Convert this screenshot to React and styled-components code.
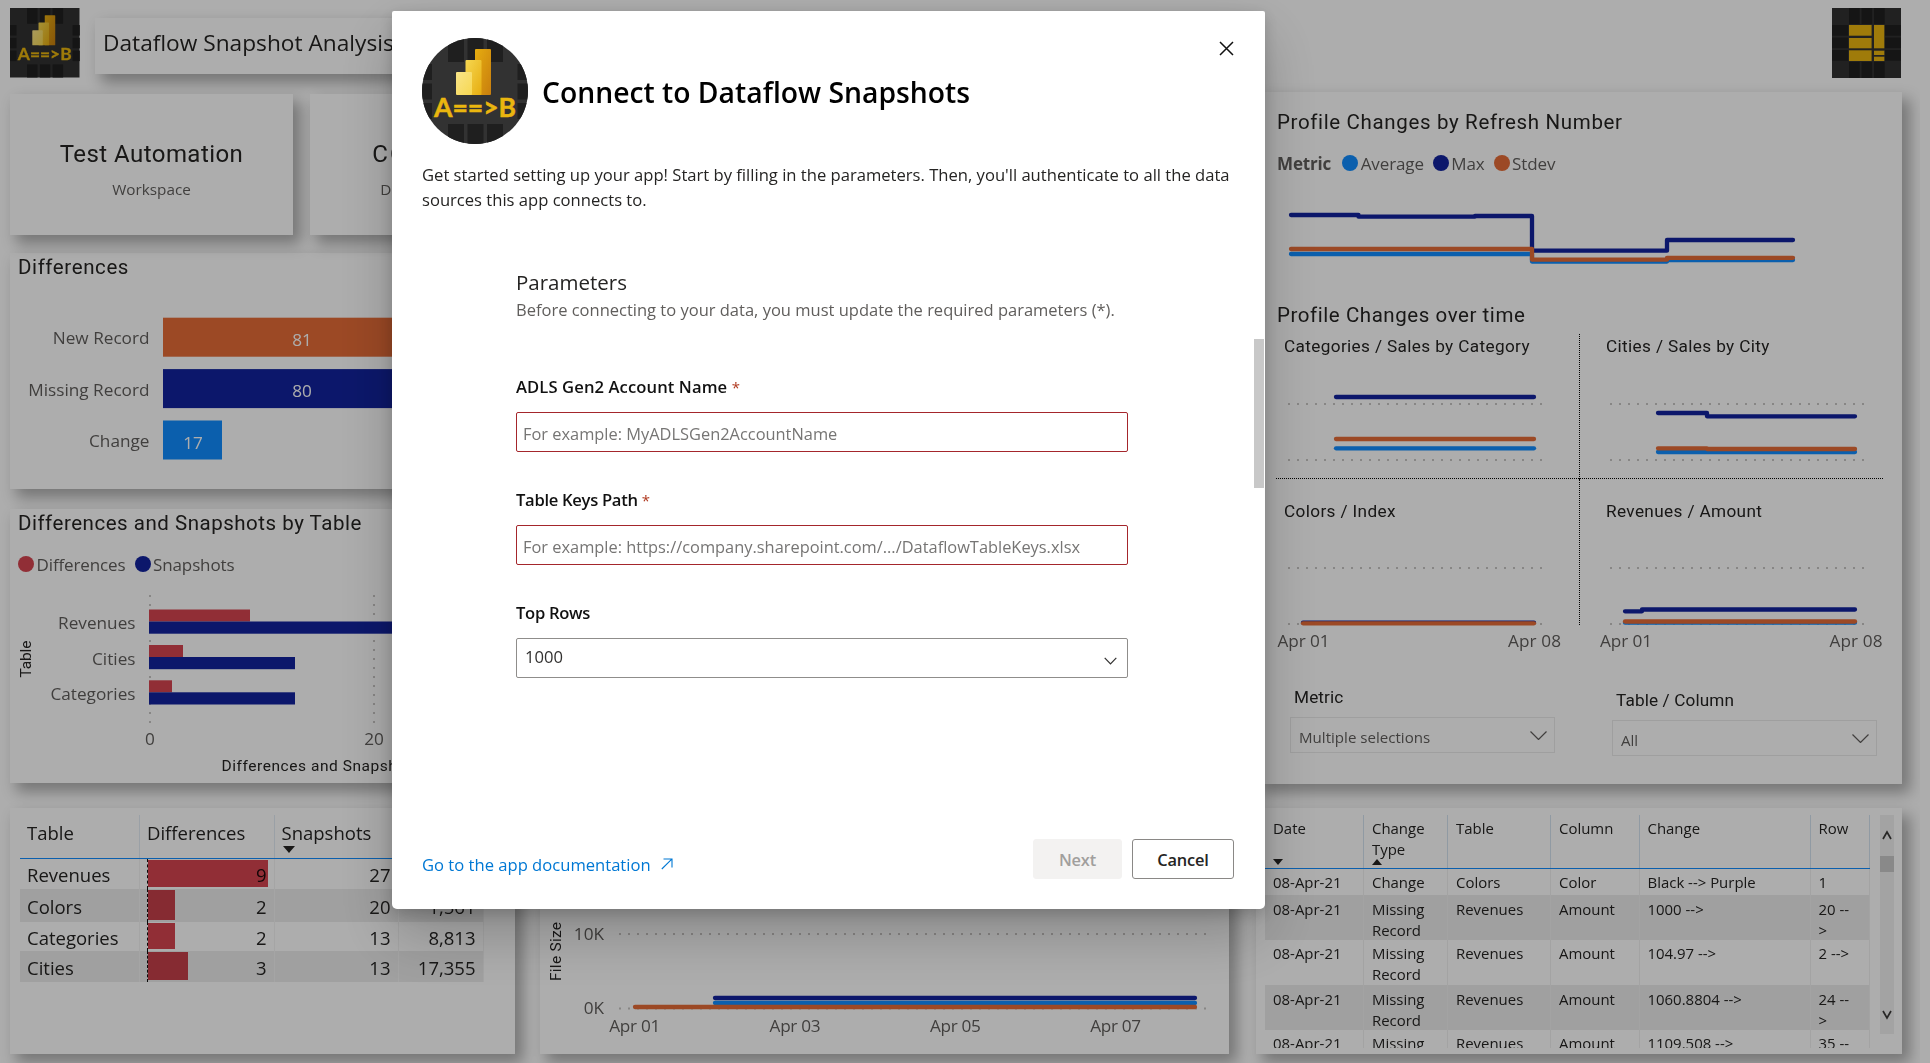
import React from "react";
import styled, { createGlobalStyle } from "styled-components";

const Navy = "#12239e";
const Blue = "#118dff";
const Orange = "#e66c37";
const Red = "#d64550";
const Segoe = `"Open Sans", "Noto Sans", sans-serif`;
const Din = `Roboto, "Liberation Sans", sans-serif`;

const differences = [
  { label: "New Record", value: 81, width: 279, color: Orange },
  { label: "Missing Record", value: 80, width: 276, color: Navy },
  { label: "Change", value: 17, width: 59, color: Blue },
];

const snapshots = [
  { name: "Revenues", y: 609.5, diff: 101, snap: 302 },
  { name: "Cities", y: 645, diff: 34, snap: 146 },
  { name: "Categories", y: 680.3, diff: 23, snap: 146 },
];

const tableRows = [
  { name: "Revenues", diff: 9, bar: 120, snap: 27, size: "", height: 30 },
  { name: "Colors", diff: 2, bar: 27, snap: 20, size: "1,561", height: 33 },
  { name: "Categories", diff: 2, bar: 27, snap: 13, size: "8,813", height: 29 },
  { name: "Cities", diff: 3, bar: 40, snap: 13, size: "17,355", height: 31 },
];

const changes = [
  ["08-Apr-21", "Change", "Colors", "Color", "Black --> Purple", "1"],
  ["08-Apr-21", "Missing Record", "Revenues", "Amount", "1000 -->", "20 --\n>"],
  ["08-Apr-21", "Missing Record", "Revenues", "Amount", "104.97 -->", "2 -->"],
  ["08-Apr-21", "Missing Record", "Revenues", "Amount", "1060.8804 -->", "24 --\n>"],
  ["08-Apr-21", "Missing", "Revenues", "Amount", "1109.508 -->", "35 --"],
];
const changeHeights = [26, 45, 45, 45, 18];

// label inside a chart, w is the drawn width
function Label({ x, y, w, anchor = "start", size = 17.2, fill = "#605e5c", family = Segoe, children, ...rest }) {
  return (
    <text
      x={x}
      y={y}
      textAnchor={anchor}
      fontSize={size}
      fontFamily={family}
      fill={fill}
      textLength={w}
      {...rest}
    >
      {children}
    </text>
  );
}

function Dots({ x1, x2, y1, y2 }) {
  return (
    <line x1={x1} x2={x2} y1={y1} y2={y2} stroke="#c8c6c4" strokeWidth="2" strokeDasharray="2 7" />
  );
}

function Series({ d, color }) {
  return <path d={d} stroke={color} strokeWidth="4.3" fill="none" strokeLinecap="round" strokeLinejoin="round" />;
}

function AppLogo({ size, round }) {
  const tiles = [26, 45.5, 65];
  return (
    <LogoSvg width={size} height={size} viewBox="0 0 106 106" $round={round}>
      <defs>
        <linearGradient id="tall" x1="0" y1="0" x2="1" y2="1">
          <stop offset="0" stopColor="#e6ad10" />
          <stop offset="1" stopColor="#c87e0e" />
        </linearGradient>
        <linearGradient id="mid" x1="0" y1="0" x2="1" y2="1">
          <stop offset="0" stopColor="#f6d751" />
          <stop offset="1" stopColor="#e6ad10" />
        </linearGradient>
        <linearGradient id="low" x1="0" y1="0" x2="1" y2="1">
          <stop offset="0" stopColor="#f9e589" />
          <stop offset="1" stopColor="#f6d751" />
        </linearGradient>
      </defs>
      <rect width="106" height="106" fill="#323232" />
      {tiles.map((t) => (
        <g key={t} fill="#1f1f1f">
          <rect x={t} y="0" width="16" height="24" />
          <rect x={t} y="86" width="16" height="20" />
          <rect x="0" y={t} width="10" height="16" />
          <rect x="95.5" y={t} width="11" height="16" />
        </g>
      ))}
      <rect x="53" y="11" width="16" height="46" rx="1" fill="url(#tall)" />
      <rect x="43.5" y="22" width="16" height="35" rx="1" fill="url(#mid)" />
      <rect x="34" y="34" width="16" height="23" rx="1" fill="url(#low)" />
      <text
        x="12"
        y="78.7"
        fontFamily={`Lato, ${Segoe}`}
        fontWeight="700"
        fontSize="27"
        fill="#eab60f"
        stroke="#eab60f"
        strokeWidth="0.5"
        textLength="82"
        lengthAdjust="spacingAndGlyphs"
      >
        {"A==>B"}
      </text>
    </LogoSvg>
  );
}

function TilesLogo() {
  const tiles = [17, 29.5, 42];
  return (
    <LogoSvg width="69" height="70" viewBox="0 0 69 70">
      <rect width="69" height="70" fill="#323232" />
      {tiles.map((t) => (
        <g key={t} fill="#1f1f1f">
          <rect x={t} y="0" width="10.7" height="16" />
          <rect x={t} y="54" width="10.7" height="16" />
          <rect x="0" y={t} width="16" height="10.7" />
          <rect x="53" y={t} width="16" height="10.7" />
        </g>
      ))}
      <g fill="#eab60f">
        <rect x="17" y="17" width="22.6" height="10.7" />
        <rect x="17" y="30" width="22.6" height="10.3" />
        <rect x="17" y="42.3" width="22.6" height="10.7" />
        <rect x="42" y="17" width="10.3" height="23.3" />
        <rect x="42" y="42.7" width="10.3" height="4.3" />
        <rect x="42" y="48.7" width="10.3" height="4.3" />
      </g>
    </LogoSvg>
  );
}

function DifferencesCard() {
  return (
    <Card $height={236}>
      <CardTitle $spacing={0.6}>Differences</CardTitle>
      <svg width="500" height="205" viewBox="10 284 500 205">
        {differences.map((d, i) => {
          const y = 317.7 + i * 51.4;
          return (
            <g key={d.label}>
              <rect x="163" y={y} width={d.width} height="39" fill={d.color} />
              <Label x="149.500" y={y + 26.5} anchor="end">
                {d.label}
              </Label>
              <Label x={i === 2 ? 193 : 302} y={y + 28.3} anchor="middle" fill="#fff">
                {d.value}
              </Label>
            </g>
          );
        })}
      </svg>
    </Card>
  );
}

function SnapshotsCard() {
  return (
    <Card $height={274}>
      <CardTitle $spacing={0.52}>Differences and Snapshots by Table</CardTitle>
      <Legend $top={11}>
        <LegendItem $color={Red}>Differences</LegendItem>
        <LegendItem $color={Navy}>Snapshots</LegendItem>
      </Legend>
      <svg width="500" height="206" viewBox="10 577 500 206">
        <Dots x1="150" x2="150" y1="595" y2="723" />
        <Dots x1="374" x2="374" y1="595" y2="723" />
        {snapshots.map((s) => (
          <g key={s.name}>
            <rect x="149" y={s.y} width={s.diff} height="12" fill={Red} />
            <rect x="149" y={s.y + 12} width={s.snap} height="12.2" fill={Navy} />
            <Label x="135.500" y={s.y + 19.9} anchor="end">
              {s.name}
            </Label>
          </g>
        ))}
        <Label x="150" y="745" anchor="middle">0</Label>
        <Label x="374" y="745" anchor="middle">20</Label>
        <Label x="221.500" y="771" size={15.5} family={Din} fill="#252423" letterSpacing="0.55">
          Differences and Snapshots
        </Label>
        <Label x="0" y="0" w="37" anchor="middle" size={15.5} family={Din} fill="#252423" transform="translate(31.3 659) rotate(-90)">
          Table
        </Label>
      </svg>
    </Card>
  );
}

function SummaryTable() {
  return (
    <Card $height={246} $width={505}>
      <Summary>
        <SummaryHead>
          <SummaryCell $width={120}>Table</SummaryCell>
          <SummaryCell $width={134.5}>Differences</SummaryCell>
          <SummaryCell $width={124}>
            Snapshots
            <SortMark width="12" height="7" viewBox="0 0 12 7">
              <path d="M0 0h12l-6 7z" fill="#252423" />
            </SortMark>
          </SummaryCell>
          <SummaryCell $width={85}>File Size</SummaryCell>
        </SummaryHead>
        {tableRows.map((r, i) => (
          <SummaryRow key={r.name} $height={r.height} $striped={i % 2 === 1}>
            <SummaryCell $width={120}>{r.name}</SummaryCell>
            <SummaryCell $width={134.5} $right>
              <DataBar $width={r.bar} />
              {r.diff}
            </SummaryCell>
            <SummaryCell $width={124} $right>
              {r.snap}
            </SummaryCell>
            <SummaryCell $width={85} $right>
              {r.size}
            </SummaryCell>
          </SummaryRow>
        ))}
      </Summary>
    </Card>
  );
}

function FileSizeCard() {
  return (
    <Card $height={246} $width={689}>
      <svg width="689" height="246" viewBox="540 808 689 246">
        <Dots x1="619" x2="1207" y1="934" y2="934" />
        <Dots x1="619" x2="1207" y1="1008.5" y2="1008.5" />
        <Series d="M715 998H1195" color={Navy} />
        <Series d="M715 1003H1195" color={Blue} />
        <Series d="M635 1007H1195" color={Orange} />
        <Label x="604" y="940" anchor="end">10K</Label>
        <Label x="604" y="1014" anchor="end">0K</Label>
        {["Apr 01", "Apr 03", "Apr 05", "Apr 07"].map((t, i) => (
          <Label key={t} x={634.8 + i * 160.3} y="1032" anchor="middle" w="51">
            {t}
          </Label>
        ))}
        <Label x="0" y="0" w="59" anchor="middle" size={15.5} family={Din} fill="#252423" transform="translate(561 951.5) rotate(-90)">
          File Size
        </Label>
      </svg>
    </Card>
  );
}

function ProfilePanel() {
  return (
    <Card $height={692}>
      <PanelBody>
        <CardTitle $flush $spacing={0.65}>Profile Changes by Refresh Number</CardTitle>
        <Legend $flush $top={14}>
          <LegendName>Metric</LegendName>
          <LegendItem $color={Blue}>Average</LegendItem>
          <LegendItem $color={Navy}>Max</LegendItem>
          <LegendItem $color={Orange}>Stdev</LegendItem>
        </Legend>
        <svg width="607" height="125" viewBox="1277 176 607 125">
          <Series d="M1291 254H1532V261.5H1667V260H1793" color={Blue} />
          <Series d="M1291 215H1358.5V216.7H1475V216H1532V250.7H1667V240H1793" color={Navy} />
          <Series d="M1291 249H1532V259.7H1667V257.8H1793" color={Orange} />
        </svg>
        <CardTitle $flush $spacing={0.56}>Profile Changes over time</CardTitle>
        <Trellis>
          <TrellisCell $left={7} $bottom $divider={145}>
            <h4>Categories / Sales by Category</h4>
            <svg width="302" height="120" viewBox="1276 358 302 120">
              <Dots x1="1288" x2="1544" y1="404" y2="404" />
              <Dots x1="1288" x2="1544" y1="460" y2="460" />
              <Series d="M1336 397H1534" color={Navy} />
              <Series d="M1336 439H1534" color={Orange} />
              <Series d="M1336 448.3H1534" color={Blue} />
            </svg>
          </TrellisCell>
          <TrellisCell $left={26} $bottom>
            <h4>Cities / Sales by City</h4>
            <svg width="303" height="120" viewBox="1579 358 303 120">
              <Dots x1="1610" x2="1865" y1="404" y2="404" />
              <Dots x1="1610" x2="1865" y1="460" y2="460" />
              <Series d="M1658 413H1707V416.3H1855" color={Navy} />
              <Series d="M1658 452H1855" color={Blue} />
              <Series d="M1658 448.3H1707V449H1855" color={Orange} />
            </svg>
          </TrellisCell>
          <TrellisCell $left={7} $top={20} $divider={146}>
            <h4>Colors / Index</h4>
            <svg width="302" height="132" viewBox="1276 523 302 132">
              <Dots x1="1288" x2="1544" y1="568" y2="568" />
              <Dots x1="1288" x2="1544" y1="624" y2="624" />
              <Series d="M1303 622.7H1534" color={Navy} />
              <Series d="M1303 623.3H1534" color={Orange} />
              <Label x="1277.5" y="647" w="52">Apr 01</Label>
              <Label x="1508" y="647" w="53">Apr 08</Label>
            </svg>
          </TrellisCell>
          <TrellisCell $left={26} $top={20}>
            <h4>Revenues / Amount</h4>
            <svg width="304" height="132" viewBox="1579 523 304 132">
              <Dots x1="1610" x2="1865" y1="568" y2="568" />
              <Dots x1="1610" x2="1865" y1="624" y2="624" />
              <Series d="M1625 611.3H1642V609.5H1855" color={Navy} />
              <Series d="M1625 622.7H1855" color={Blue} />
              <Series d="M1625 621.5H1855" color={Orange} />
              <Label x="1600" y="647" w="52">Apr 01</Label>
              <Label x="1829.500" y="647" w="53">Apr 08</Label>
            </svg>
          </TrellisCell>
        </Trellis>
        <Slicers>
          <Slicer>
            <h4>Metric</h4>
            <SlicerBox>
              Multiple selections
              <Chevron width="17" height="9" viewBox="0 0 17 9" />
            </SlicerBox>
          </Slicer>
          <Slicer $top={3}>
            <h4>Table / Column</h4>
            <SlicerBox>
              All
              <Chevron width="17" height="9" viewBox="0 0 17 9" />
            </SlicerBox>
          </Slicer>
        </Slicers>
      </PanelBody>
    </Card>
  );
}

function Chevron(props) {
  return (
    <svg {...props} fill="none" stroke="#605e5c" strokeWidth="1.2">
      <path d="M.5.5l8 8 8-8" />
    </svg>
  );
}

function ChangesCard() {
  return (
    <Card $height={246}>
      <ChangesBody>
        <ChangesTable>
          <ChangesHead>
            <span>
              Date
              <ChangeSort width="10" height="6" viewBox="0 0 10 6">
                <path d="M0 0h10L5 6z" fill="#252423" />
              </ChangeSort>
            </span>
            <span>
              Change Type
              <ChangeSort width="10" height="6" viewBox="0 0 10 6">
                <path d="M0 6h10L5 0z" fill="#252423" />
              </ChangeSort>
            </span>
            <span>Table</span>
            <span>Column</span>
            <span>Change</span>
            <span>Row</span>
          </ChangesHead>
          {changes.map((row, i) => (
            <ChangesRow key={row[4]} $height={changeHeights[i]} $striped={i % 2 === 1}>
              {row.map((cell, n) => (
                <span key={n}>{cell}</span>
              ))}
            </ChangesRow>
          ))}
        </ChangesTable>
        <ScrollTrack>
          <svg width="10" height="11" viewBox="0 0 10 11" fill="none" stroke="#3b3a39" strokeWidth="1.700">
            <path d="M1 9L5 2l4 7" />
          </svg>
          <ScrollThumb />
          <svg width="10" height="11" viewBox="0 0 10 11" fill="none" stroke="#3b3a39" strokeWidth="1.700">
            <path d="M1 2l4 7 4-7" />
          </svg>
        </ScrollTrack>
      </ChangesBody>
    </Card>
  );
}

function ConnectDialog() {
  return (
    <Overlay>
      <Dialog role="dialog">
        <CloseButton aria-label="Close">
          <svg width="15" height="15" viewBox="0 0 15 15" stroke="#111" strokeWidth="1.5">
            <path d="M1 1l13 13M14 1L1 14" />
          </svg>
        </CloseButton>
        <DialogHeader>
          <AppLogo size={106} round />
          <h1>Connect to Dataflow Snapshots</h1>
        </DialogHeader>
        <Intro>
          Get started setting up your app! Start by filling in the parameters. Then, you'll authenticate to all the data
          <br />
          sources this app connects to.
        </Intro>
        <Form>
          <h2>Parameters</h2>
          <p>Before connecting to your data, you must update the required parameters (*).</p>
          <Field $spacing={0.1}>
            <label>
              ADLS Gen2 Account Name <Required>*</Required>
            </label>
            <Input placeholder="For example: MyADLSGen2AccountName" />
          </Field>
          <Field>
            <label>
              Table Keys Path <Required>*</Required>
            </label>
            <Input placeholder="For example: https://company.sharepoint.com/.../DataflowTableKeys.xlsx" />
          </Field>
          <Field>
            <label>Top Rows</label>
            <Select>
              1000
              <svg width="13" height="8" viewBox="0 0 13 8" fill="none" stroke="#323130" strokeWidth="1.2">
                <path d="M.7.8l5.800 6 5.800-6" />
              </svg>
            </Select>
          </Field>
        </Form>
        <DialogFooter>
          <DocLink>
            Go to the app documentation
            <svg width="12" height="12" viewBox="0 0 12 12" fill="none" stroke="#0078d4" strokeWidth="1.1">
              <path d="M.8 11L10.800 1.200M2.500 1h8.500v8.500" />
            </svg>
          </DocLink>
          <Button $width={89} disabled>
            Next
          </Button>
          <Button $width={102}>Cancel</Button>
        </DialogFooter>
        <DialogScroll />
      </Dialog>
    </Overlay>
  );
}

function App() {
  return (
    <>
      <GlobalStyle />
      <Report>
        <Header>
          <AppLogo size={69.5} />
          <TitleCard>Dataflow Snapshot Analysis</TitleCard>
          <TilesLogo />
        </Header>
        <Columns>
          <LeftColumn>
            <StatRow>
              <StatCard $width={283} $spacing={0.45}>
                <strong>Test Automation</strong>
                <span>Workspace</span>
              </StatCard>
              <StatCard $width={204} $spacing={2}>
                <strong>COVID</strong>
                <span>Dataflow</span>
              </StatCard>
            </StatRow>
            <DifferencesCard />
            <SnapshotsCard />
            <BottomRow>
              <SummaryTable />
              <FileSizeCard />
            </BottomRow>
          </LeftColumn>
          <RightColumn>
            <ProfilePanel />
            <ChangesCard />
          </RightColumn>
        </Columns>
      </Report>
      <ConnectDialog />
    </>
  );
}

export default App;

const GlobalStyle = createGlobalStyle`
  * {
    box-sizing: border-box;
  }

  body {
    margin: 0;
    background: #fff;
    font-family: ${Segoe};
    overflow: hidden;
  }

  h1, h2, h3, h4, p {
    margin: 0;
    font-weight: 400;
  }

  svg {
    display: block;
    flex-shrink: 0;
  }
`;

const Report = styled.div`
  width: 1920px;
  height: 1063px;
  overflow: hidden;
  background: #fff;
`;

const Header = styled.header`
  display: flex;
  align-items: flex-start;
  height: 92px;
  padding: 8px 19px 0 10px;
  > svg:last-child {
    margin-left: auto;
  }
`;

const LogoSvg = styled.svg`
  border-radius: ${({ $round }) => ($round ? "50%" : 0)};
`;

const cardShadow = `7px 8px 14px 1px rgba(0, 0, 0, 0.32)`;

const TitleCard = styled.div`
  width: 700px;
  height: 56px;
  margin: 10px 0 0 15.5px;
  padding-left: 8px;
  background: #fff;
  box-shadow: ${cardShadow};
  color: #252423;
  font-size: 22.7px;
  line-height: 49px;
`;

const Columns = styled.div`
  display: flex;
  gap: 27px;
  padding-left: 10px;
`;

const LeftColumn = styled.div`
  width: 1219px;
  padding-top: 2px;
  > :nth-child(2) {
    margin: 18px 0 20px;
  }
  > :nth-child(2),
  > :nth-child(3) {
    width: 700px;
  }
`;

const RightColumn = styled.div`
  display: flex;
  flex-direction: column;
  gap: 24px;
  width: 646px;
`;

const BottomRow = styled.div`
  display: flex;
  gap: 25px;
  margin-top: 25px;
`;

const Card = styled.section`
  width: ${({ $width }) => ($width ? `${$width}px` : "auto")};
  height: ${({ $height }) => $height}px;
  background: #fff;
  box-shadow: ${cardShadow};
`;

const CardTitle = styled.h3`
  padding: ${({ $flush }) => ($flush ? 0 : "0 0 3px 8px")};
  color: #252423;
  font-family: ${Din};
  font-size: 20.5px;
  line-height: 28px;
  letter-spacing: ${({ $spacing }) => $spacing}px;
`;

const StatRow = styled.div`
  display: flex;
  gap: 17px;
`;

const StatCard = styled.div`
  display: flex;
  flex-direction: column;
  align-items: center;
  width: ${({ $width }) => $width}px;
  height: 141px;
  padding-top: 43px;
  background: #fff;
  box-shadow: ${cardShadow};
  strong {
    color: #252423;
    font-family: ${Din};
    font-size: 24px;
    font-weight: 400;
    line-height: 34px;
    letter-spacing: ${({ $spacing }) => $spacing}px;
  }
  span {
    margin-top: 6px;
    color: #605e5c;
    font-size: 15.3px;
    line-height: 24px;
  }
`;

const Legend = styled.div`
  display: flex;
  align-items: center;
  height: 26px;
  margin-top: ${({ $top }) => $top}px;
  padding-left: ${({ $flush }) => ($flush ? 0 : 8)}px;
  color: #605e5c;
  font-size: 17px;
`;

const LegendName = styled.b`
  margin-right: 11px;
  font-weight: 700;
  letter-spacing: -0.15px;
`;

const LegendItem = styled.span`
  display: flex;
  align-items: center;
  gap: 2.5px;
  margin-right: 9px;
  letter-spacing: -0.12px;
  &::before {
    content: "";
    width: 16px;
    height: 16px;
    border-radius: 50%;
    background: ${({ $color }) => $color};
  }
`;

const Summary = styled.div`
  width: 464px;
  margin-left: 10px;
  padding-top: 7px;
  color: #252423;
  font-size: 18.5px;
`;

const SummaryHead = styled.div`
  display: flex;
  height: 44px;
  border-bottom: 1px solid ${Blue};
  line-height: 35px;
  > div {
    border-right: 1px solid #e3ecf5;
  }
`;

const SummaryRow = styled.div`
  display: flex;
  height: ${({ $height }) => $height}px;
  line-height: ${({ $height }) => $height + 2}px;
  background: ${({ $striped }) => ($striped ? "#ececec" : "#fff")};
`;

const SummaryCell = styled.div`
  position: relative;
  width: ${({ $width }) => $width}px;
  padding: 0 7px 0 7px;
  border-right: 1px solid #f3f3f3;
  text-align: ${({ $right }) => ($right ? "right" : "left")};
`;

// sits behind the number of its cell
const DataBar = styled.i`
  position: absolute;
  z-index: 0;
  top: 1px;
  bottom: 2px;
  left: 8px;
  width: ${({ $width }) => $width}px;
  background: ${Red};
  mix-blend-mode: multiply;
  &::before {
    content: "";
    position: absolute;
    top: -1px;
    bottom: -2px;
    left: -1px;
    border-left: 1px dashed #111;
  }
`;

const SortMark = styled.svg`
  position: absolute;
  left: 8px;
  bottom: 5px;
`;

const PanelBody = styled.div`
  padding: 16px 0 0 21px;
`;

const Trellis = styled.div`
  display: grid;
  grid-template-columns: 303px 304px;
  margin: 5px 0 0 -1px;
  h4 {
    color: #252423;
    font-family: ${Din};
    font-size: 17.2px;
    line-height: 24px;
    letter-spacing: 0.36px;
  }
`;

const TrellisCell = styled.div`
  position: relative;
  padding-top: ${({ $top }) => $top || 0}px;
  border-bottom: ${({ $bottom }) => ($bottom ? "1px dotted #000" : "none")};
  h4 {
    padding-left: ${({ $left }) => $left + 1}px;
  }
  &::after {
    content: "";
    position: absolute;
    top: 0;
    right: -1px;
    height: ${({ $divider }) => $divider || 0}px;
    border-right: 1px dotted #000;
  }
`;

const Slicers = styled.div`
  display: flex;
  gap: 57px;
  margin: 30px 0 0 13px;
`;

const Slicer = styled.div`
  width: 265px;
  padding-top: ${({ $top }) => $top || 0}px;
  h4 {
    padding-left: 4px;
    color: #252423;
    font-family: ${Din};
    font-size: 17.2px;
    line-height: 24px;
    letter-spacing: 0.12px;
  }
`;

const SlicerBox = styled.div`
  display: flex;
  align-items: center;
  justify-content: space-between;
  height: 36px;
  margin-top: 8px;
  padding: 4px 7px 0 8px;
  border: 1px solid #eaeaea;
  color: #605e5c;
  font-size: 15.1px;
  > svg {
    margin-top: -3px;
  }
`;

const ChangesBody = styled.div`
  display: flex;
  align-items: flex-start;
  padding: 7px 0 0 9px;
`;

const ChangesTable = styled.div`
  width: 605px;
  height: 233px;
  overflow: hidden;
  color: #252423;
  font-size: 14.95px;
  line-height: 20.5px;
`;

const ChangesRow = styled.div`
  display: grid;
  grid-template-columns: 99px 84px 103px 88.5px 171px 59.5px;
  height: ${({ $height }) => $height}px;
  background: ${({ $striped }) => ($striped ? "#ececec" : "#fff")};
  > span {
    position: relative;
    padding: ${({ $striped }) => ($striped ? 4 : 3)}px 0 0 8px;
    border-right: 1px solid #f1f1f1;
    white-space: pre-line;
  }
`;

const ChangesHead = styled(ChangesRow)`
  height: 54px;
  border-bottom: 1px solid ${Blue};
  line-height: 21px;
  > span {
    padding-top: 3px;
    border-right-color: #d5e3f0;
  }
`;

const ChangeSort = styled.svg`
  position: absolute;
  left: 8px;
  bottom: 3px;
`;

const ScrollTrack = styled.div`
  display: flex;
  flex-direction: column;
  align-items: center;
  width: 14px;
  height: 219px;
  margin-left: 10px;
  padding: 15px 0 14px;
  background: #f1f1f1;
  > :last-child {
    margin-top: auto;
  }
`;

const ScrollThumb = styled.div`
  width: 14px;
  height: 16px;
  margin-top: 15px;
  background: #cbcbcb;
`;

const Overlay = styled.div`
  position: fixed;
  inset: 0;
  padding: 11px 0 0 392px;
  background: rgba(0, 0, 0, 0.32);
`;

const Dialog = styled.div`
  position: relative;
  display: flex;
  flex-direction: column;
  width: 873px;
  height: 898px;
  padding: 27px 31px 30px 30px;
  border-radius: 2px 2px 5px 5px;
  background: #fff;
  box-shadow: 0 25.6px 57.6px rgba(0, 0, 0, 0.22), 0 4.8px 14.4px rgba(0, 0, 0, 0.18);
  color: #252423;
  font-size: 16.6px;
`;

const CloseButton = styled.button`
  position: absolute;
  top: 30px;
  right: 31px;
  padding: 0;
  border: none;
  background: none;
`;

const DialogHeader = styled.div`
  display: flex;
  align-items: center;
  h1 {
    margin: 2px 0 0 14px;
    color: #000;
    font-size: 28.3px;
    font-weight: 600;
    line-height: 36px;
  }
`;

const Intro = styled.p`
  margin-top: 18px;
  line-height: 25px;
  white-space: nowrap;
`;

const Form = styled.div`
  width: 612px;
  margin: 56px 0 0 94px;
  h2 {
    font-size: 20.5px;
    line-height: 28px;
  }
  p {
    margin: 2px 0 53px;
    color: #605e5c;
    font-size: 16.5px;
    line-height: 24px;
    white-space: nowrap;
  }
`;

const Field = styled.div`
  margin-bottom: 36px;
  label {
    display: block;
    margin-bottom: 13px;
    color: #111;
    font-weight: 600;
    line-height: 24px;
    letter-spacing: ${({ $spacing }) => $spacing || -0.3}px;
  }
`;

const Required = styled.span`
  color: #b03a20;
  font-size: 15px;
  font-weight: 400;
`;

const Input = styled.input`
  display: block;
  width: 612px;
  height: 40px;
  padding: 2px 6px 0;
  border: 1px solid #a4262c;
  border-radius: 2px;
  font-family: ${Segoe};
  font-size: 16.4px;
  &::placeholder {
    color: #767574;
  }
`;

const Select = styled.div`
  display: flex;
  justify-content: space-between;
  height: 40px;
  padding: 0 10px 0 8px;
  border: 1px solid #8f8d8b;
  border-radius: 2px;
  color: #323130;
  line-height: 35px;
  > svg {
    margin-top: 18px;
  }
`;

const DialogFooter = styled.div`
  display: flex;
  gap: 10px;
  margin-top: auto;
`;

const DocLink = styled.a`
  display: flex;
  align-items: center;
  gap: 10px;
  margin: 10px auto 0 0;
  color: #0078d4;
`;

const Button = styled.button`
  width: ${({ $width }) => $width}px;
  height: 40px;
  padding: 0;
  border: 1px solid #8a8886;
  border-radius: 3px;
  background: #fff;
  color: #252423;
  font-family: ${Segoe};
  font-size: 16.4px;
  font-weight: 600;
  letter-spacing: -0.15px;
  &:disabled {
    border-color: #f3f2f1;
    background: #f3f2f1;
    color: #a19f9d;
  }
`;

const DialogScroll = styled.div`
  position: absolute;
  top: 328px;
  right: 1px;
  width: 10px;
  height: 149px;
  background: #c8c8c8;
`;
